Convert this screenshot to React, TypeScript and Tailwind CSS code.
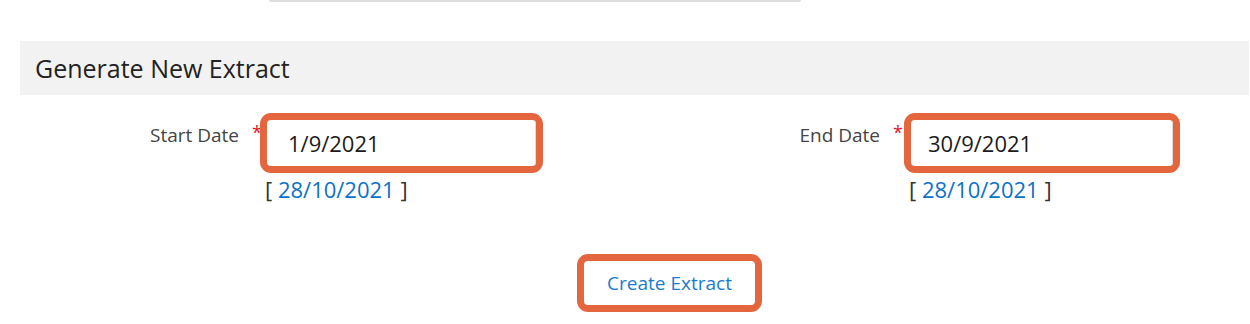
import React from "react";

const font = { fontFamily: '"Open Sans", "Noto Sans", "Liberation Sans", sans-serif' };

const DateField = ({
    label,
    value,
    labelWidth,
    labelPad,
    boxWidth,
    padLeft,
}: {
    label: string;
    value: string;
    labelWidth: string;
    labelPad: string;
    boxWidth: string;
    padLeft: string;
}) => {
    return (
        <div className="flex items-start">
            <div className={`${labelWidth} ${labelPad} flex justify-end items-start pt-[9px]`}>
                <span className="text-[19px] leading-[26px] text-[#444444]">{label}</span>
                <span className="ml-[13px] w-[8px] text-[18px] leading-[20px] text-[#e8112d]">*</span>
            </div>
            <div className="flex flex-col">
                <div className={`${boxWidth} h-[60px] rounded-[11px] border-[7px] border-[#e4663f] bg-white flex`}>
                    <div className={`flex-1 flex items-center rounded-[4px] border-r border-[#dcdcdc] ${padLeft}`}>
                        <span className="text-[22px] leading-[30px] text-[#1b1b1b]">{value}</span>
                    </div>
                </div>
                <div className="mt-[2px] pl-[5px] text-[22px] leading-[28px] text-[#333333]">
                    [ <span className="text-[#0b72c9]">28/10/2021</span> ]
                </div>
            </div>
        </div>
    );
};

export default function App() {
    return (
        <div className="w-[1250px] h-[324px] bg-white overflow-hidden" style={font}>
            <div className="ml-[269px] w-[532px] h-[2px] bg-[#dedede] rounded-b-[2px]" />

            <div className="mt-[39px] ml-[20px] mr-[1px] h-[54px] bg-[#f2f2f2] flex items-center pl-[15px]">
                <h2 className="text-[25px] leading-[32px] text-[#222222]">Generate New Extract</h2>
            </div>

            <div className="mt-[18px] flex">
                <DateField label="Start Date" value="1/9/2021" labelWidth="w-[260px]" labelPad="pr-0" boxWidth="w-[283px]" padLeft="pl-[21px]" />
                <DateField label="End Date" value="30/9/2021" labelWidth="w-[361px]" labelPad="pr-[3px]" boxWidth="w-[276px]" padLeft="pl-[17px]" />
            </div>

            <div className="mt-[51px] ml-[577px]">
                <button className="w-[185px] h-[58px] rounded-[11px] border-[7px] border-[#e4663f] bg-white flex items-center justify-center">
                    <span className="text-[19px] leading-[26px] text-[#1a7bd0]">Create Extract</span>
                </button>
            </div>
        </div>
    );
}
